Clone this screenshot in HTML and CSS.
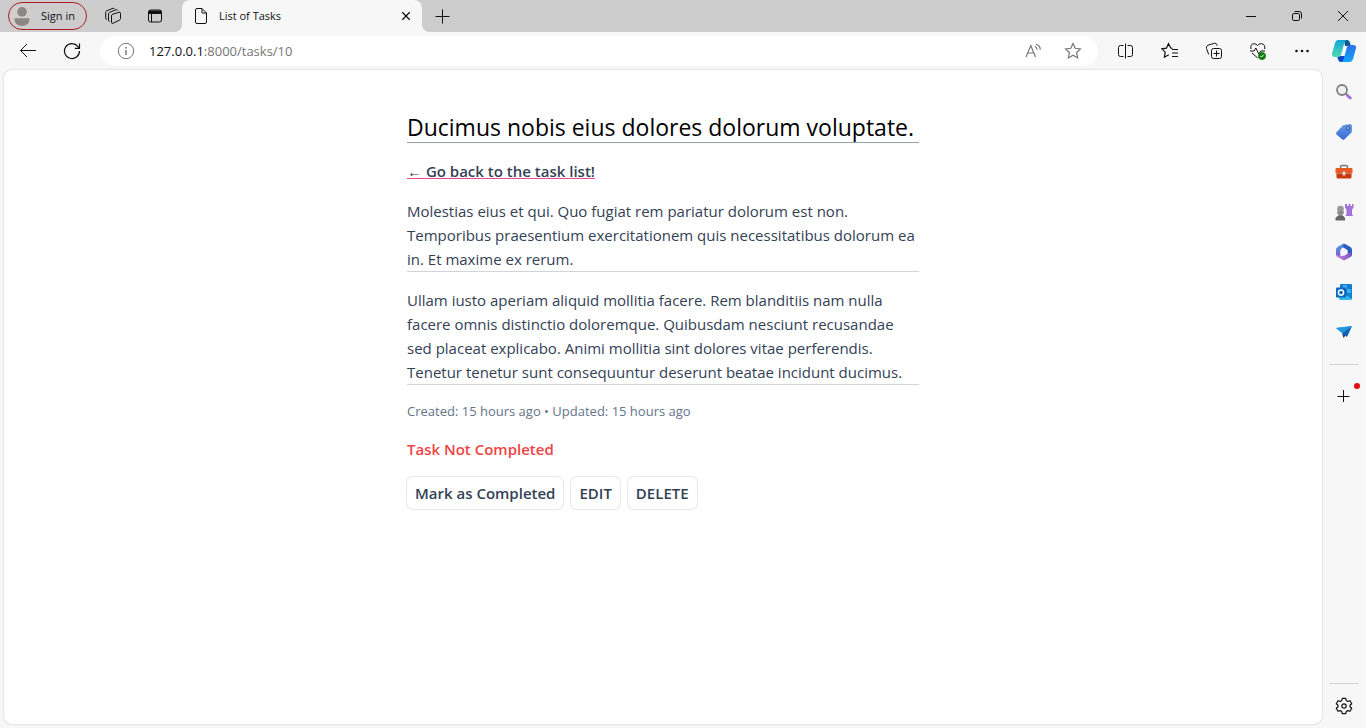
FILE: index.html
```html
<!DOCTYPE html>
<html lang="en">
<head>
<meta charset="utf-8">
<title>List of Tasks</title>
<link rel="stylesheet" href="styles.css">
</head>
<body>
<header class="tab-strip">
  <button class="sign-in" type="button">
    <svg width="22" height="22" viewBox="0 0 22 22"><circle cx="11" cy="11" r="11" fill="#d0cdcb"/><circle cx="11" cy="6.8" r="4.8" fill="#8b8785"/><path d="M3.5 13.3h15v1.500c0 3.800-3.600 6.200-7.500 6.200s-7.500-2.400-7.500-6.200z" fill="#8b8785"/></svg>
    <span>Sign in</span>
  </button>
  <button class="strip-button" type="button" aria-label="Workspaces">
    <svg class="line" width="18" height="18" viewBox="0 0 18 18"><path d="M8 7.500 15 5.200q1.500-.4 1.500 1.200v5.200q0 1-1 1.500L9 16.300q-1.500.5-1.500-1V8.800q0-1 .5-1.300z"/><path d="M5.500 14.500q-1-.3-1-1.500V7q0-1.200 1-1.600l6.500-2.700q1.300-.3 1.600.7M3 12.500q-1.300-.3-1.300-1.600V5.500q0-1.300 1.100-1.800L9 1.300q1-.3 1.500.5"/></svg>
  </button>
  <button class="strip-button" type="button" aria-label="Tab actions">
    <svg class="line" width="16" height="16" viewBox="0 0 16 16"><rect x="1.500" y="2" width="13" height="12" rx="2"/><path d="M2 3h12v2.500H2z" fill="#111"/><path d="M4.500 5.500V14"/></svg>
  </button>
  <div class="tab">
    <svg class="line" width="14" height="18" viewBox="0 0 14 18"><path d="M3 1.500h5L12.500 6v9q0 1.500-1.500 1.500H3q-1.500 0-1.500-1.500V3Q1.500 1.500 3 1.500zM8 1.700V6h4.300"/></svg>
    <span class="tab-title">List of Tasks</span>
    <button class="tab-close" type="button" aria-label="Close tab"><svg class="line" width="10" height="10" viewBox="0 0 10 10"><path d="m1.300 1.300 7.400 7.400m0-7.400L1.300 8.700" stroke-width="1.300"/></svg></button>
  </div>
  <button class="strip-button" type="button" aria-label="New tab"><svg class="line" width="15" height="15" viewBox="0 0 15 15"><path d="M7.500.5v14M.5 7.500h14"/></svg></button>
  <div class="window-controls">
    <button type="button" aria-label="Minimize"><svg class="line" width="12" height="12" viewBox="0 0 12 12"><path d="M1 6.500h10"/></svg></button>
    <button type="button" aria-label="Restore"><svg class="line" width="12" height="12" viewBox="0 0 12 12"><rect x="1.500" y="3.500" width="7" height="7" rx="1.300"/><path d="M3.500 1.500H8q2.500 0 2.500 2.500v4.500"/></svg></button>
    <button type="button" aria-label="Close"><svg class="line" width="12" height="12" viewBox="0 0 12 12"><path d="m1 1 10 10M11 1 1 11"/></svg></button>
  </div>
</header>

<div class="toolbar">
  <button class="tool" type="button" aria-label="Back"><svg class="line" width="18" height="16" viewBox="0 0 18 16"><path d="M17 7.500H1.500M8 1 1.500 7.500 8 14"/></svg></button>
  <button class="tool" type="button" aria-label="Refresh"><svg class="line" width="18" height="18" viewBox="0 0 18 18"><path d="M16.500 9A7.500 7.500 0 1 1 14.800 4.300L16.300 6M16.500 1.500v4.800h-4.700" stroke-width="1.200"/></svg></button>
  <div class="address">
    <svg class="line gray" width="18" height="18" viewBox="0 0 18 18"><circle cx="9" cy="9" r="7.700"/><path d="M9 8v5M9 5v1.500" stroke-width="1.500"/></svg>
    <a class="url" href="#"><span class="host">127.0.0.1</span>:8000/tasks/10</a>
    <button class="field-button" type="button" aria-label="Read aloud"><svg class="line gray" width="18" height="18" viewBox="0 0 18 18"><path d="M2 15 6.800 3.500 11.500 15M3.600 11h6.300M11 4.200q2 1.200 2 3.500M12 2q4.500 1.900 4.200 5.700" stroke-width="1.200"/></svg></button>
    <button class="field-button" type="button" aria-label="Add to favorites"><svg class="line gray" width="18" height="18" viewBox="0 0 18 18"><path d="m9 1.500 2.200 4.800 5.200.6-3.800 3.600 1 5.400L9 13.300l-4.600 2.600 1-5.400-3.800-3.600 5.200-.6z" stroke-width="1.200"/></svg></button>
  </div>
  <button class="tool" type="button" aria-label="Split screen"><svg class="line" width="18" height="16" viewBox="0 0 18 16"><path d="M6.500 2.500H3.500Q1.500 2.500 1.500 4.500v7q0 2 2 2h3M10.500 2.500h3q2 0 2 2v7q0 2-2 2h-3M8.500.5v15"/></svg></button>
  <button class="tool" type="button" aria-label="Favorites"><svg class="line" width="18" height="18" viewBox="0 0 18 18"><path d="M11.500 6.300 9.800 6 7.500 1.700 5.400 6.200l-4.500.6 3.300 3.300-.8 5.100 4.400-2.500M11 7.500h6M11 11h6M11 14.500h6" stroke-width="1.200"/></svg></button>
  <button class="tool" type="button" aria-label="Collections"><svg class="line" width="18" height="18" viewBox="0 0 18 18"><path d="M3.700 12.500 1.500 6.500Q.8 4 3 3.200L9.500 1.300q2-.4 2.500 1.500v1"/><rect x="6.500" y="6.500" width="10" height="10" rx="2"/><path d="M11.500 8.500v6M8.500 11.500h6"/></svg></button>
  <button class="tool" type="button" aria-label="Browser essentials"><svg class="line" width="18" height="18" viewBox="0 0 18 18"><path d="M2 7Q1 2 5 1.700q2 0 3.500 1.800Q10 1.500 12.500 1.700 16.500 2.200 15.700 7M1 9h4l1.800-3 3 6 1.900-3H16M3 11l5.700 5"/><circle cx="13" cy="14" r="3.500" fill="#107c10" stroke="#107c10"/><path d="m11.500 14 1 1 2-2.200" stroke="#fff"/></svg></button>
  <button class="tool" type="button" aria-label="Settings and more"><svg width="16" height="16" viewBox="0 0 16 16" fill="#111"><circle cx="2.500" cy="8" r="1.300"/><circle cx="8" cy="8" r="1.300"/><circle cx="13.500" cy="8" r="1.300"/></svg></button>
  <button class="copilot" type="button" aria-label="Copilot"><svg width="26" height="24" viewBox="0 0 26 24">
    <defs><linearGradient id="teal" x2="0" y2="1"><stop stop-color="#16a5dc"/><stop offset="1" stop-color="#4fdcae"/></linearGradient><linearGradient id="blue" x2="0" y2="1"><stop stop-color="#2f6eea"/><stop offset="1" stop-color="#0ba7fa"/></linearGradient></defs>
    <path d="M13 1h3q2 0 2.700 2L20 7h-6z" fill="#085c91"/><path d="M6 17h8l-2 6h-2q-2 0-2.700-2z" fill="#1142ca"/><path d="M7 1h8.500q-1.500.4-2.200 3L10 16q-.5 2-3 2H4Q0 18 1.200 14L4 4Q5 1 7 1z" fill="url(#teal)"/><path d="M19 23h-8.500q1.500-.4 2.200-3L16 8q.5-2 3-2h3q4 0 2.800 4L22 20q-1 3-3 3z" fill="url(#blue)"/></svg></button>
</div>

<div class="workspace">
  <main class="page">
    <article class="task">
      <h1 class="task-title">Ducimus nobis eius dolores dolorum voluptate.</h1>
      <nav class="back"><a class="back-link" href="#">← Go back to the task list!</a></nav>
      <p class="text">Molestias eius et qui. Quo fugiat rem pariatur dolorum est non. Temporibus praesentium exercitationem quis necessitatibus dolorum ea in. Et maxime ex rerum.</p>
      <p class="text">Ullam iusto aperiam aliquid mollitia facere. Rem blanditiis nam nulla facere omnis distinctio doloremque. Quibusdam nesciunt recusandae sed placeat explicabo. Animi mollitia sint dolores vitae perferendis. Tenetur tenetur sunt consequuntur deserunt beatae incidunt ducimus.</p>
      <p class="dates">Created: 15 hours ago • Updated: 15 hours ago</p>
      <p class="status">Task Not Completed</p>
      <div class="actions">
        <button class="btn" type="button">Mark as Completed</button>
        <a class="btn" href="#">EDIT</a>
        <button class="btn" type="button">DELETE</button>
      </div>
    </article>
  </main>

  <aside class="sidebar">
    <button class="side" type="button" aria-label="Search"><svg width="18" height="18" viewBox="0 0 18 18" fill="none"><circle cx="7" cy="7" r="5" fill="#f0f0f0" stroke="#808080" stroke-width="1.800"/><path d="m10.800 10.800 1.500 1.500" stroke="#777" stroke-width="2"/><path d="m12.500 12.500 2.700 2.500" stroke="#a56bd6" stroke-width="3" stroke-linecap="round"/></svg></button>
    <button class="side" type="button" aria-label="Shopping"><svg width="18" height="18" viewBox="0 0 18 18"><defs><linearGradient id="tag" x2="0" y2="1"><stop stop-color="#689bea"/><stop offset="1" stop-color="#356bd0"/></linearGradient></defs><path d="m9 2 6-1q2 0 2 2l-.2 5.500q0 1-.8 1.500l-6.500 6.300q-1.200 1-2.400 0L1.500 11.500q-1-1.200 0-2.200L7.700 2.700Q8.200 2.100 9 2z" fill="url(#tag)"/><circle cx="13" cy="5" r="1.500" fill="#eef" stroke="#173d87"/></svg></button>
    <button class="side" type="button" aria-label="Tools"><svg width="18" height="18" viewBox="0 0 18 18"><path d="M5.500 6V4q0-1.500 1.500-1.500h4q1.500 0 1.500 1.500v2" fill="none" stroke="#777" stroke-width="1.500"/><rect x=".5" y="5" width="17" height="5.500" rx="1" fill="#e75a22"/><path d="M1.500 10.500h15V14q0 1.500-1.500 1.500H3q-1.500 0-1.500-1.500z" fill="#cb390f"/><rect x="7.500" y="8.500" width="3" height="4" rx="1" fill="#d5dce0"/></svg></button>
    <button class="side" type="button" aria-label="Games"><svg width="20" height="20" viewBox="0 0 20 20"><path d="M11 2h2v2h1.500V2h2v2H18V2h1.500v4L18 7.500V12l1 2h-7.500l1-2V7.500L11 6z" fill="#a373da"/><circle cx="6.500" cy="7" r="3.300" fill="#999"/><path d="M3 9.500h7v2H8.500l.5 3H4l.500-3H3z" fill="#888"/><path d="M3.500 14h6l1.500 2v2.500H1.500V16z" fill="#666"/></svg></button>
    <button class="side" type="button" aria-label="Microsoft 365"><svg width="18" height="18" viewBox="0 0 18 18">
      <defs><linearGradient id="ring-left" x2="0" y2="1"><stop stop-color="#3f9be0"/><stop offset="1" stop-color="#8a5fd6"/></linearGradient><linearGradient id="ring-base"><stop stop-color="#c48ae0"/><stop offset="1" stop-color="#7d52c9"/></linearGradient></defs>
      <path d="M8 .7 2.500 4Q1 5 1 7v4q0 2 1.500 3Q5 15 5.500 12V8q0-2 1.500-3l4-2.500-1-1.500Q9 .2 8 .7z" fill="url(#ring-left)"/><path d="m10 1 5.500 3Q17 5 17 7v4q0 2-1.300 2.800L12.500 11V8q0-1-1-1.600L7.500 4 9 1z" fill="#2a5dc4"/><path d="M1.500 12.500q.7 1.200 2 2L8 17q1 .6 2 0l5.500-3q1.500-1 1.500-3.500l-4.500-.5-2.500 1.900q-3 1.600-8.500.6z" fill="url(#ring-base)"/><path d="m9 5.500 3.500 1.800v3.500L9 12.700l-3.500-1.900V7.300z" fill="#f7f7f7"/></svg></button>
    <button class="side" type="button" aria-label="Outlook"><svg width="18" height="18" viewBox="0 0 18 18"><rect x="5" y="1" width="12" height="12" rx="1" fill="#157ccc"/><path d="M8 2h4v4H8zM12 6h4v4h-4z" fill="#39afed"/><path d="M4 8.500 11 13l6-4v6.500q0 1.500-1.500 1.500h-10Q4 17 4 15.500z" fill="#32b9ef"/><path d="m17 16-6-4 6-3z" fill="#1681d2"/><rect x="1" y="4.500" width="10" height="10" rx="1" fill="#0967bd"/><circle cx="6" cy="9.500" r="2.600" fill="none" stroke="#fff" stroke-width="1.500"/></svg></button>
    <button class="side" type="button" aria-label="Drop"><svg width="18" height="18" viewBox="0 0 18 18"><path d="m1 5 16-2-10 7z" fill="#39a5ec"/><path d="m17 3-5 11-5-4z" fill="#0963b5"/><path d="m7 10 1.500 5 2-2.600z" fill="#173f75"/><path d="m1 5 6 5L17 3z" fill="#2294dd"/></svg></button>
    <hr class="divider">
    <button class="side" type="button" aria-label="Customize"><svg class="line" width="14" height="14" viewBox="0 0 14 14"><path d="M6.500 1v12M.5 7.500h12"/></svg><span class="dot"></span></button>
    <hr class="divider last">
    <button class="side" type="button" aria-label="Settings"><svg class="line" width="18" height="18" viewBox="0 0 18 18"><path d="m7.300 1.300-.6 2.300-1.400.8L3 3.700 1.300 6.700 3 8.300v1.400l-1.700 1.600L3 14.300l2.300-.7 1.400.8.600 2.300h3.400l.6-2.300 1.400-.8 2.300.7 1.700-3L15 9.700V8.300l1.700-1.600-1.700-3-2.300.7-1.400-.8-.6-2.300z" stroke-linejoin="round" stroke-width="1.200"/><circle cx="9" cy="9" r="2.200" stroke-width="1.200"/></svg></button>
  </aside>
</div>
</body>
</html>
```
FILE: styles.css
```css
* { box-sizing: border-box; }
body {
  margin: 0;
  height: 100vh;
  display: flex;
  flex-direction: column;
  background: #f7f7f7;
  color: #111;
  font-family: "Open Sans", "Noto Sans", sans-serif;
}
button { font: inherit; color: inherit; background: none; border: 0; padding: 0; }
a { color: inherit; text-decoration: none; }
svg { display: block; flex: none; }
.line { fill: none; stroke: #111; }
.gray { stroke: #767676; }

.tab-strip { display: flex; align-items: center; flex: none; height: 32px; padding-left: 8px; background: #cdcdcd; font-size: 11px; line-height: 14px; }
.sign-in { display: flex; align-items: center; gap: 8px; height: 28px; margin-right: 5px; padding: 0 11px 0 2px; border: 1px solid #ad1d27; border-radius: 14px; white-space: nowrap; }
.strip-button { display: grid; place-items: center; width: 42px; height: 32px; }
.tab { position: relative; display: flex; align-items: center; gap: 11px; width: 240px; height: 32px; margin-left: 6px; padding: 0 11px 0 12px; border-radius: 8px 8px 0 0; background: #f7f7f7; }
.tab::before, .tab::after { content: ""; position: absolute; bottom: 0; width: 8px; height: 8px; }
.tab::before { right: 100%; background: radial-gradient(circle at 0 0, #cdcdcd 8px, #f7f7f7 8px); }
.tab::after { left: 100%; background: radial-gradient(circle at 100% 0, #cdcdcd 8px, #f7f7f7 8px); }
.tab-title { flex: 1; }
.window-controls { display: flex; margin-left: auto; }
.window-controls button { display: grid; place-items: center; width: 46px; height: 32px; }

.toolbar { display: flex; align-items: center; flex: none; height: 38px; padding: 0 2px 0 6px; }
.tool { display: grid; place-items: center; flex: none; width: 44px; height: 38px; }
.address { display: flex; align-items: center; flex: 1; height: 30px; margin: 0 6px; padding: 0 5px 0 17px; border-radius: 15px; background: #fff; }
.url { flex: 1; margin-left: 14px; color: #767676; font-size: 13px; }
.host { color: #111; }
.field-button { display: grid; place-items: center; width: 40px; height: 30px; }
.copilot { display: grid; place-items: center; flex: none; width: 40px; height: 38px; }

.workspace { display: flex; flex: 1; min-height: 0; }
.page { flex: 1; margin: 0 0 4px 4px; padding: 40px 16px; overflow: auto; border-radius: 8px; background: #fff; box-shadow: 0 0 2px #bbb; }
.sidebar { display: flex; flex-direction: column; align-items: center; width: 44px; padding: 2px 0; }
.side { position: relative; display: grid; place-items: center; flex: none; width: 40px; height: 40px; }
.divider { flex: none; width: 28px; height: 1px; margin: 12px 0 11px; border: 0; background: #cfcfcf; }
.last { margin: auto 0 2px; }
.dot { position: absolute; top: 7px; right: 4px; width: 6px; height: 6px; border-radius: 50%; background: #e00b0b; }

.task { max-width: 512px; margin: 0 auto; color: #334155; font-size: 15px; line-height: 24px; }
.task-title { margin: 0 0 16px; padding-top: 2px; border-bottom: 1px solid #94a0b0; color: #000; font-size: 23px; font-weight: 400; line-height: 30px; }
.back { margin-bottom: 16px; }
.back-link {
  font-weight: 600;
  text-decoration-line: underline;
  text-decoration-color: #ec4899;
  text-decoration-thickness: 1px;
  text-decoration-skip-ink: none;
}
.text { margin: 0 0 16px; border-bottom: 1px solid #d1d5db; }
.dates { margin: 0 0 16px; color: #64748b; font-size: 13px; line-height: 20px; }
.status { margin: 0 0 16px; color: #ef4444; font-weight: 600; }
.actions { display: flex; gap: 8px; }
.btn { padding: 4px 8px; border-radius: 6px; font-weight: 600; box-shadow: 0 0 0 1px #e6e9ed, 0 1px 2px #0000000d; }
```
